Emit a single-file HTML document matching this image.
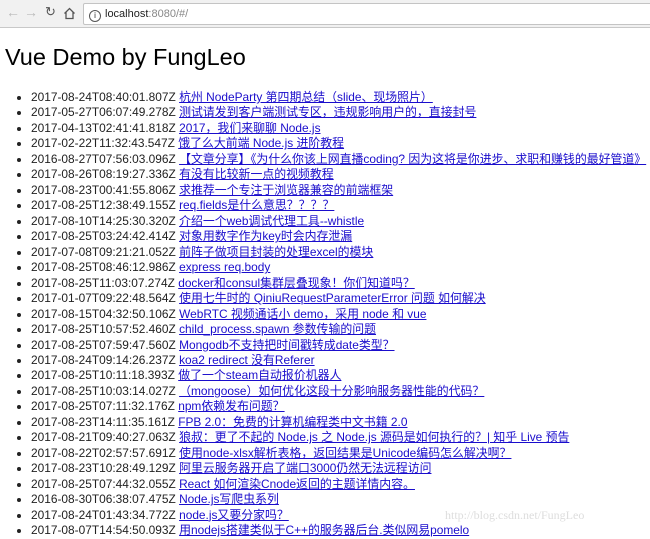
<!DOCTYPE html>
<html><head><meta charset="utf-8"><style>
html,body{margin:0;padding:0;width:650px;height:536px;overflow:hidden;background:#fff;font-family:"Liberation Sans","Noto Sans CJK SC",sans-serif;}
.bar{position:absolute;left:0;top:0;width:650px;height:27px;background:#f1f1f1;border-bottom:1px solid #c8c8c8;}
.url{position:absolute;left:83px;top:3px;width:570px;height:20px;background:#fff;border:1px solid #c4c4c4;border-radius:2px;font-size:11px;line-height:20px;color:#222;}
.nav{position:absolute;top:4px;font-size:14px;color:#555;}
h1{position:absolute;left:5px;top:41px;margin:0;font-size:23.5px;font-weight:normal;color:#000;line-height:32px;}
ul{position:absolute;left:0;top:90px;margin:0;padding:0 0 0 31px;font-size:11.9px;line-height:15.47px;color:#222;white-space:nowrap;}
li{list-style:disc;}
a{color:#1a0dcc;text-decoration:underline;}
.wm{position:absolute;left:445px;top:508px;font-family:"Liberation Serif",serif;font-size:12px;color:#ddd;}
</style></head><body>
<div class="bar">
<span class="nav" style="left:6px;color:#bbb">&#8592;</span>
<span class="nav" style="left:24px;color:#bbb">&#8594;</span>
<span class="nav" style="left:45px;font-size:13px">&#8635;</span>
<svg style="position:absolute;left:63px;top:7px" width="13" height="13" viewBox="0 0 13 13"><path d="M1.5 6.5L6.5 1.5L11.5 6.5M3 5V11.5H10V5" fill="none" stroke="#555" stroke-width="1.3"/></svg>
<div class="url"><span style="display:inline-block;width:10px;height:10px;border:1px solid #555;border-radius:50%;font-size:8px;line-height:10px;text-align:center;margin:0 4px 0 5px;vertical-align:-1px">i</span>localhost<span style="color:#888">:8080/#/</span></div>
</div>
<h1>Vue Demo by FungLeo</h1>
<ul>
<li>2017-08-24T08:40:01.807Z <a>杭州 NodeParty 第四期总结（slide、现场照片）</a></li>
<li>2017-05-27T06:07:49.278Z <a>测试请发到客户端测试专区，违规影响用户的，直接封号</a></li>
<li>2017-04-13T02:41:41.818Z <a>2017，我们来聊聊 Node.js</a></li>
<li>2017-02-22T11:32:43.547Z <a>饿了么大前端 Node.js 进阶教程</a></li>
<li>2016-08-27T07:56:03.096Z <a>【文章分享】《为什么你该上网直播coding? 因为这将是你进步、求职和赚钱的最好管道》</a></li>
<li>2017-08-26T08:19:27.336Z <a>有没有比较新一点的视频教程</a></li>
<li>2017-08-23T00:41:55.806Z <a>求推荐一个专注于浏览器兼容的前端框架</a></li>
<li>2017-08-25T12:38:49.155Z <a>req.fields是什么意思？？？？</a></li>
<li>2017-08-10T14:25:30.320Z <a>介绍一个web调试代理工具--whistle</a></li>
<li>2017-08-25T03:24:42.414Z <a>对象用数字作为key时会内存泄漏</a></li>
<li>2017-07-08T09:21:21.052Z <a>前阵子做项目封装的处理excel的模块</a></li>
<li>2017-08-25T08:46:12.986Z <a>express req.body</a></li>
<li>2017-08-25T11:03:07.274Z <a>docker和consul集群层叠现象！你们知道吗？</a></li>
<li>2017-01-07T09:22:48.564Z <a>使用七牛时的 QiniuRequestParameterError 问题 如何解决</a></li>
<li>2017-08-15T04:32:50.106Z <a>WebRTC 视频通话小 demo，采用 node 和 vue</a></li>
<li>2017-08-25T10:57:52.460Z <a>child_process.spawn 参数传输的问题</a></li>
<li>2017-08-25T07:59:47.560Z <a>Mongodb不支持把时间戳转成date类型？</a></li>
<li>2017-08-24T09:14:26.237Z <a>koa2 redirect 没有Referer</a></li>
<li>2017-08-25T10:11:18.393Z <a>做了一个steam自动报价机器人</a></li>
<li>2017-08-25T10:03:14.027Z <a>（mongoose）如何优化这段十分影响服务器性能的代码？</a></li>
<li>2017-08-25T07:11:32.176Z <a>npm依赖发布问题？</a></li>
<li>2017-08-23T14:11:35.161Z <a>FPB 2.0：免费的计算机编程类中文书籍 2.0</a></li>
<li>2017-08-21T09:40:27.063Z <a>狼叔：更了不起的 Node.js 之 Node.js 源码是如何执行的？| 知乎 Live 预告</a></li>
<li>2017-08-22T02:57:57.691Z <a>使用node-xlsx解析表格，返回结果是Unicode编码怎么解决啊？</a></li>
<li>2017-08-23T10:28:49.129Z <a>阿里云服务器开启了端口3000仍然无法远程访问</a></li>
<li>2017-08-25T07:44:32.055Z <a>React 如何渲染Cnode返回的主题详情内容。</a></li>
<li>2016-08-30T06:38:07.475Z <a>Node.js写爬虫系列</a></li>
<li>2017-08-24T01:43:34.772Z <a>node.js又要分家吗？</a></li>
<li>2017-08-07T14:54:50.093Z <a>用nodejs搭建类似于C++的服务器后台.类似网易pomelo</a></li>
</ul>
<div class="wm">http://blog.csdn.net/FungLeo</div>
</body></html>
